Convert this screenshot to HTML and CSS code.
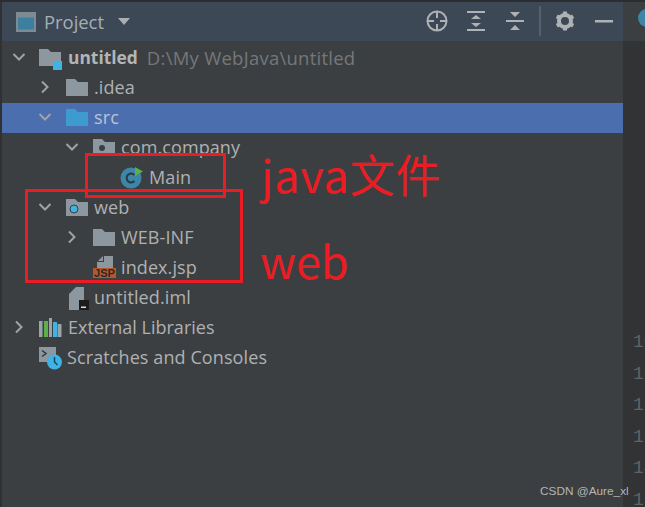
FILE: index.html
```html
<!DOCTYPE html>
<html lang="en">
<head>
<meta charset="utf-8">
<title>Project</title>
<link rel="stylesheet" href="styles.css">
</head>
<body>
<div class="app">
  <section class="panel">
    <header class="head">
      <svg class="ic-win" width="24" height="24" viewBox="0 0 24 24"><rect x="3" y="3" width="20" height="20" fill="#7f8b93"/><rect x="5" y="8.500" width="16" height="12" fill="#3d7f9f"/></svg>
      <span class="head-title">Project</span>
      <svg class="caret" width="14" height="9" viewBox="0 0 14 9"><path d="M1 1h12L7 8z" fill="#a9afb3"/></svg>
      <div class="tools">
        <svg class="tool" width="24" height="24" viewBox="0 0 24 24" fill="none" stroke="#aeb2b5"><circle cx="12" cy="12" r="9.500" stroke-width="2"/><path d="M12 3v6M12 15v6M3 12h6M15 12h6" stroke-width="2"/></svg>
        <svg class="tool" width="24" height="24" viewBox="0 0 24 24" fill="#aeb2b5"><rect x="3" y="2" width="18" height="2"/><rect x="3" y="20" width="18" height="2"/><path d="M12 6l5 4H7zM12 18l5-4H7z"/></svg>
        <svg class="tool" width="24" height="24" viewBox="0 0 24 24" fill="#aeb2b5"><rect x="3" y="11" width="18" height="2"/><path d="M7 3h10l-5 5zM7 21h10l-5-5z"/></svg>
        <span class="sep"></span>
        <svg class="tool" width="24" height="24" viewBox="0 0 24 24"><circle cx="12" cy="12" r="6" fill="none" stroke="#aeb2b5" stroke-width="4"/><path d="M12 2.500v4M12 17.500v4M3.800 7.200l3.500 2M16.700 14.800l3.500 2M3.800 16.800l3.500-2M16.700 9.200l3.500-2" stroke="#aeb2b5" stroke-width="4"/></svg>
        <svg class="tool" width="24" height="24" viewBox="0 0 24 24" fill="#aeb2b5"><rect x="3" y="11" width="18" height="2.500"/></svg>
      </div>
    </header>
    <ul class="tree">
      <li class="row l1"><svg class="arrow" width="14" height="14" viewBox="0 0 14 14"><path d="M1.500 4l5.500 5.500L12.500 4" /></svg>
        <svg class="ico" width="23" height="26" viewBox="0 0 23 26"><path d="M0 5h9l3 3h10v14H0z" fill="#8c979f"/><rect x="14" y="17" width="9" height="9" fill="#3db3e6"/></svg>
        <b class="name">untitled</b><span class="path">D:\My WebJava\untitled</span></li>
      <li class="row l2"><svg class="arrow" width="14" height="14" viewBox="0 0 14 14"><path d="M4 1.500L9.500 7 4 12.500"/></svg>
        <svg class="ico" width="22" height="20" viewBox="0 0 22 20"><path d="M0 2h9l3 3h10v14H0z" fill="#8c979f"/></svg>.idea</li>
      <li class="row l2 sel"><svg class="arrow" width="14" height="14" viewBox="0 0 14 14"><path d="M1.500 4l5.500 5.500L12.500 4"/></svg>
        <svg class="ico" width="22" height="20" viewBox="0 0 22 20"><path d="M0 2h9l3 3h10v14H0z" fill="#3d9bd0"/></svg>src</li>
      <li class="row l3"><svg class="arrow" width="14" height="14" viewBox="0 0 14 14"><path d="M1.500 4l5.500 5.500L12.500 4"/></svg>
        <svg class="ico" width="22" height="20" viewBox="0 0 22 20"><path d="M0 2h9l3 3h10v14H0z" fill="#8c979f"/><circle cx="9" cy="11" r="3" fill="#3c3f41"/></svg>com.company</li>
      <li class="row l4"><svg class="ico" width="24" height="24" viewBox="0 0 24 24"><circle cx="12" cy="13" r="10.500" fill="#3d86a8"/><path d="M15.500 10a4.500 4.500 0 1 0 0 6" fill="none" stroke="#2b3a42" stroke-width="2"/><path d="M16 2l8 4.500-8 4.500z" fill="#5bb04a"/></svg>Main</li>
      <li class="row l2"><svg class="arrow" width="14" height="14" viewBox="0 0 14 14"><path d="M1.500 4l5.500 5.500L12.500 4"/></svg>
        <svg class="ico" width="22" height="20" viewBox="0 0 22 20"><path d="M0 2h9l3 3h10v14H0z" fill="#8c979f"/><circle cx="8" cy="12" r="4" fill="#3db3e6" stroke="#3c3f41"/></svg>web</li>
      <li class="row l3"><svg class="arrow" width="14" height="14" viewBox="0 0 14 14"><path d="M4 1.500L9.500 7 4 12.500"/></svg>
        <svg class="ico" width="22" height="20" viewBox="0 0 22 20"><path d="M0 2h9l3 3h10v14H0z" fill="#8c979f"/></svg>WEB-INF</li>
      <li class="row l3b"><span class="jsp"><svg width="16" height="12" viewBox="0 0 16 12"><path d="M0 12V6h7V0h9v12z" fill="#8c979f"/><path d="M6 0v5H1z" fill="#8c979f"/></svg><span class="jsp-tag">JSP</span></span>index.jsp</li>
      <li class="row l2c"><svg class="ico" width="20" height="26" viewBox="0 0 20 26"><path d="M0 10l7-7h8v23H0z" fill="#8c979f"/><rect x="10" y="16" width="10" height="10" fill="#1c1c1c"/><rect x="12" y="22.500" width="5" height="1.500" fill="#ddd"/></svg>untitled.iml</li>
      <li class="row l1"><svg class="arrow" width="14" height="14" viewBox="0 0 14 14"><path d="M4 1.500L9.500 7 4 12.500"/></svg>
        <svg class="ico" width="23" height="19" viewBox="0 0 23 19"><rect x="0" y="3" width="3.500" height="16" fill="#9aa3a8"/><rect x="5" y="3" width="4" height="16" fill="#5bb04a"/><rect x="10" y="0" width="3" height="19" fill="#9aa3a8"/><rect x="14" y="4" width="4" height="15" fill="#3db3e6"/><rect x="18.500" y="6" width="4" height="13" fill="#9aa3a8"/></svg>External Libraries</li>
      <li class="row l1b"><svg class="ico" width="23" height="26" viewBox="0 0 23 26"><path d="M0 3h17v8a8 8 0 0 0-7 7H0z" fill="#8c979f"/><path d="M3 6.500l4 3-4 3" fill="none" stroke="#33373a" stroke-width="1.500"/><circle cx="15.500" cy="18" r="7.500" fill="#3db3e6"/><path d="M15.500 13v5l3 3" fill="none" stroke="#20465c" stroke-width="1.500"/></svg>Scratches and Consoles</li>
    </ul>
    <div class="mark mark-main"></div>
    <div class="mark mark-web"></div>
    <div class="note note-java">java文件</div>
    <div class="note note-web">web</div>
    <div class="credit">CSDN @Aure_xl</div>
  </section>
  <aside class="editor">
    <div class="tabbar"><span class="tab-dot"></span></div>
    <div class="gutter">
      <span class="ln">10</span><span class="ln">11</span><span class="ln">12</span><span class="ln">13</span><span class="ln">14</span><span class="ln">15</span>
    </div>
  </aside>
</div>
</body>
</html>
```
FILE: styles.css
```css
* { box-sizing: border-box; }
html, body { margin: 0; padding: 0; height: 100%; overflow: hidden; }
body { background: #3c3f41; font-family: "Open Sans", "Noto Sans CJK SC", sans-serif; color: #afb1b3; }
.app { display: flex; width: 645px; height: 507px; border-top: 2px solid #2b2d2f; }
.panel { position: relative; width: 623px; flex: none; border-left: 2px solid #2f3133; background: #3c3f41; }
.head { display: flex; align-items: center; height: 39px; background: #3c4855; padding: 0 0 1px 11px; }
.ic-win { margin-right: 7px; }
.head-title { font-size: 18.400px; color: #a7aeb3; margin-right: 13px; }
.tools { display: flex; align-items: center; margin-left: auto; margin-right: 7px; gap: 15px; }
.sep { width: 2px; height: 30px; background: #56606a; margin: 0 -3px; }
.tree { list-style: none; margin: 0; padding: 2px 0 0; }
.row { display: flex; align-items: center; height: 30px; padding-bottom: 2px; font-size: 18px; letter-spacing: .1px; white-space: nowrap; }
.sel { background: #4b6eaf; color: #b9c4d6; }
.arrow { fill: none; stroke: #9ea3a7; stroke-width: 2; margin-right: 14px; flex: none; }
.ico { flex: none; margin-right: 6px; }
.l1 { padding-left: 10px; letter-spacing: 0; }
.l2 { padding-left: 36px; }
.l3 { padding-left: 63px; }
.l4 { padding-left: 117px; }
.l3b { padding-left: 91px; }
.l2c { padding-left: 67px; }
.l1b { padding-left: 37px; }
.l1 .arrow { margin-right: 13px; }
.l2c .ico, .l1b .ico { margin-right: 5px; }
.name { font-weight: 700; font-size: 17.400px; letter-spacing: 0; color: #b2b5b7; margin-right: 9px; }
.path { color: #74787b; font-size: 18.500px; letter-spacing: .25px; }
.jsp { position: relative; display: flex; flex-direction: column; align-items: center; width: 23px; margin-right: 5px; }
.jsp-tag { background: #b8582a; color: #2a2a2a; font: 700 11px/10px "Liberation Sans", sans-serif; letter-spacing: 0; width: 23px; text-align: center; }
.mark { position: absolute; border: 3px solid #ec1c24; }
.mark-main { left: 83px; top: 151px; width: 141px; height: 45px; }
.mark-web { left: 23px; top: 187px; width: 218px; height: 94px; }
.note { position: absolute; color: #ec1c24; font-family: "Noto Sans CJK SC", "Open Sans", sans-serif; font-size: 45px; line-height: 50px; }
.note-java { left: 259px; top: 147px; letter-spacing: .8px; }
.note-web { left: 258px; top: 233px; }
.credit { position: absolute; left: 538px; top: 481px; font: 11.800px/16px "Liberation Sans", sans-serif; color: #b5b5b5; white-space: nowrap; }
.editor { flex: 1; min-width: 0; background: #313335; overflow: hidden; }
.tabbar { height: 39px; background: #3c3f41; padding: 7px 0 0 15px; }
.tab-dot { display: block; width: 18px; height: 18px; border-radius: 50%; background: #3d86a8; }
.gutter { display: flex; flex-direction: column; gap: 9.500px; padding: 290px 0 0 10px; font: 18px/22px "Liberation Mono", monospace; color: #606366; }
```
